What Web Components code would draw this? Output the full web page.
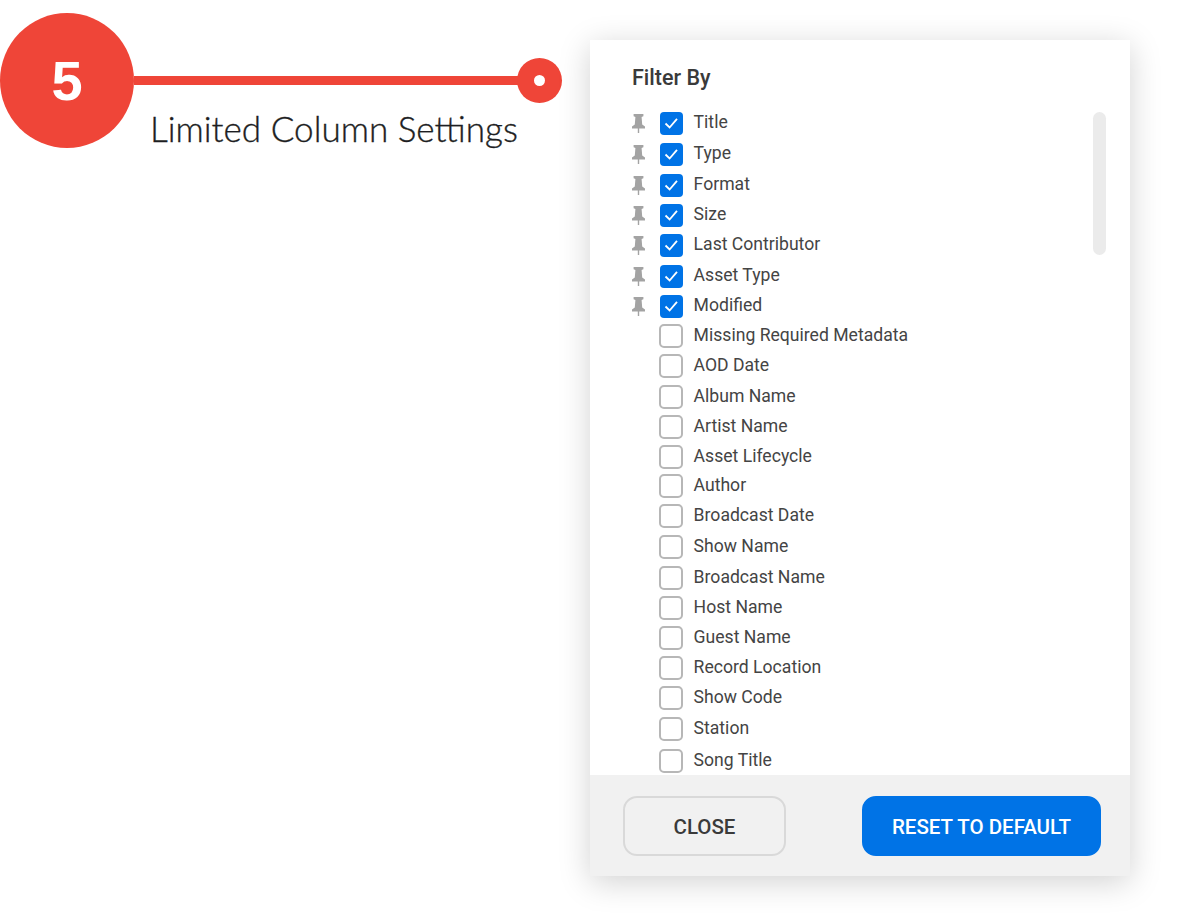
<!DOCTYPE html>
<html lang="en">
<head>
<meta charset="utf-8">
<title>Limited Column Settings</title>
<style>
    html, body { margin: 0; background: #fff; }
    body {
        display: flex;
        align-items: flex-start;
        height: 914px;
        overflow: hidden;
        font-family: Roboto, "Liberation Sans", sans-serif;
    }
</style>
</head>
<body>
<step-callout number="5">Limited Column Settings</step-callout>

<filter-panel heading="Filter By">
    <filter-option checked pinned>Title</filter-option>
    <filter-option checked pinned step="1">Type</filter-option>
    <filter-option checked pinned step="1">Format</filter-option>
    <filter-option checked pinned>Size</filter-option>
    <filter-option checked pinned>Last Contributor</filter-option>
    <filter-option checked pinned step="1">Asset Type</filter-option>
    <filter-option checked pinned>Modified</filter-option>
    <filter-option>Missing Required Metadata</filter-option>
    <filter-option>AOD Date</filter-option>
    <filter-option step="1">Album Name</filter-option>
    <filter-option>Artist Name</filter-option>
    <filter-option>Asset Lifecycle</filter-option>
    <filter-option step="-1">Author</filter-option>
    <filter-option>Broadcast Date</filter-option>
    <filter-option step="1">Show Name</filter-option>
    <filter-option step="1">Broadcast Name</filter-option>
    <filter-option>Host Name</filter-option>
    <filter-option>Guest Name</filter-option>
    <filter-option>Record Location</filter-option>
    <filter-option>Show Code</filter-option>
    <filter-option step="1">Station</filter-option>
    <filter-option step="2">Song Title</filter-option>
    <panel-button slot="footer" style="width:163px">CLOSE</panel-button>
    <panel-button slot="footer" style="width:239px" primary>RESET TO DEFAULT</panel-button>
</filter-panel>

<script>
class StepCallout extends HTMLElement {
    constructor() {
        super();
        const shadow = this.attachShadow({ mode: 'open' });
        shadow.innerHTML = `
            <style>
                :host {
                    display: flex;
                    flex: none;
                    width: 562px;
                    margin-top: 13px;
                    color: #1d1e22;
                }
                .circle {
                    flex: none;
                    width: 134px;
                    height: 135px;
                    border-radius: 50%;
                    background: #ef4538;
                    color: #fff;
                    display: flex;
                    align-items: center;
                    justify-content: center;
                    font: bold 56px "Liberation Sans", sans-serif;
                }
                .side { flex: 1; padding-top: 45px; }
                .rail { display: flex; align-items: center; height: 45px; }
                .line { flex: 1; height: 9px; background: #ef4538; }
                .dot {
                    flex: none;
                    width: 45px;
                    height: 45px;
                    margin-left: -2px;
                    border-radius: 50%;
                    background: #ef4538;
                    display: flex;
                    align-items: center;
                    justify-content: center;
                }
                .dot::after {
                    content: '';
                    width: 11px;
                    height: 11px;
                    border-radius: 50%;
                    background: #fff;
                }
                .label {
                    margin: 3px 0 0 16px;
                    font: 300 35.1px/44px Lato, "Liberation Sans", sans-serif;
                    -webkit-text-stroke: 0.35px #1d1e22;
                    white-space: nowrap;
                }
            </style>
            <div class="circle"></div>
            <div class="side">
                <div class="rail"><div class="line"></div><div class="dot"></div></div>
                <div class="label"><slot></slot></div>
            </div>
        `;
        shadow.querySelector('.circle').textContent = this.getAttribute('number');
    }
}

class FilterPanel extends HTMLElement {
    constructor() {
        super();
        const shadow = this.attachShadow({ mode: 'open' });
        shadow.innerHTML = `
            <style>
                :host {
                    display: flex;
                    flex-direction: column;
                    position: relative;
                    flex: none;
                    width: 540px;
                    height: 836px;
                    margin: 40px 0 0 28px;
                    background: #fff;
                    box-shadow: 0 6px 30px rgba(0, 0, 0, 0.18);
                }
                h2 {
                    margin: 0;
                    padding: 25px 42px 0;
                    font: 500 21.5px/26px Roboto, sans-serif;
                    color: #3a3a3a;
                }
                .list {
                    flex: 1;
                    min-height: 0;
                    overflow: hidden;
                    margin-top: 3px;
                    padding: 13px 42px 0;
                }
                .thumb {
                    position: absolute;
                    left: 503px;
                    top: 72px;
                    width: 13px;
                    height: 143px;
                    border-radius: 7px;
                    background: #ebebeb;
                }
                footer {
                    flex: none;
                    height: 101px;
                    box-sizing: border-box;
                    padding: 21px 29px 0 33px;
                    background: #f1f1f1;
                    display: flex;
                    justify-content: space-between;
                    align-items: flex-start;
                }
            </style>
            <h2></h2>
            <div class="list"><slot></slot></div>
            <div class="thumb"></div>
            <footer><slot name="footer"></slot></footer>
        `;
        shadow.querySelector('h2').textContent = this.getAttribute('heading');
    }
}

class FilterOption extends HTMLElement {
    constructor() {
        super();
        const shadow = this.attachShadow({ mode: 'open' });
        const pin = this.hasAttribute('pinned')
            ? `<svg class="pin" viewBox="0 0 13 19" width="13" height="19">
                   <path fill="#a3a3a3" d="M1.6 0h9.8v2.2L9.6 3 10.2 10.4 13 12.6v1.8H7.2V19H5.8v-4.6H0v-1.8l2.8-2.2L3.4 3 1.6 2.2z"/>
               </svg>`
            : '';
        const box = this.hasAttribute('checked')
            ? `<span class="box on">
                   <svg viewBox="0 0 23 23" width="23" height="23">
                       <path fill="none" stroke="#fff" stroke-width="1.8" d="M5.5 11.5L9.6 15.5 17 6.8"/>
                   </svg>
               </span>`
            : '<span class="box"></span>';
        shadow.innerHTML = `
            <style>
                :host {
                    display: flex;
                    align-items: center;
                    height: 30px;
                    font: 400 17.6px/24px Roboto, sans-serif;
                    color: #444;
                    white-space: nowrap;
                }
                .pin-cell { flex: none; width: 27px; height: 19px; margin-top: 3px; }
                .pin { display: block; }
                .box {
                    flex: none;
                    box-sizing: border-box;
                    width: 24px;
                    height: 24px;
                    border: 2px solid #b7b7b7;
                    border-radius: 5px;
                    background: #fff;
                    margin-top: 2px;
                }
                .box.on {
                    width: 23px;
                    height: 23px;
                    margin-top: 3px;
                    margin-left: 1px;
                    border: 0;
                    border-radius: 4px;
                    background: #0073e6;
                }
                .box svg { display: block; }
                .text { margin-left: 10.6px; }
            </style>
            <span class="pin-cell">${pin}</span>
            ${box}
            <span class="text"><slot></slot></span>
        `;
    }

    connectedCallback() {
        // the rows in the source are not evenly spaced
        const step = this.getAttribute('step');
        if (step) {
            this.style.marginTop = step + 'px';
        }
    }
}

class PanelButton extends HTMLElement {
    constructor() {
        super();
        const shadow = this.attachShadow({ mode: 'open' });
        shadow.innerHTML = `
            <style>
                :host {
                    display: flex;
                    align-items: center;
                    justify-content: center;
                    box-sizing: border-box;
                    height: 60px;
                    padding-top: 2px;
                    border: 2px solid #d9d9d9;
                    border-radius: 14px;
                    font: 500 20.5px/24px Roboto, sans-serif;
                    color: #3a3a3a;
                }
                :host([primary]) {
                    background: #0073e6;
                    border-color: #0073e6;
                    color: #fff;
                }
            </style>
            <slot></slot>
        `;
    }
}

customElements.define('step-callout', StepCallout);
customElements.define('filter-panel', FilterPanel);
customElements.define('filter-option', FilterOption);
customElements.define('panel-button', PanelButton);
</script>
</body>
</html>
